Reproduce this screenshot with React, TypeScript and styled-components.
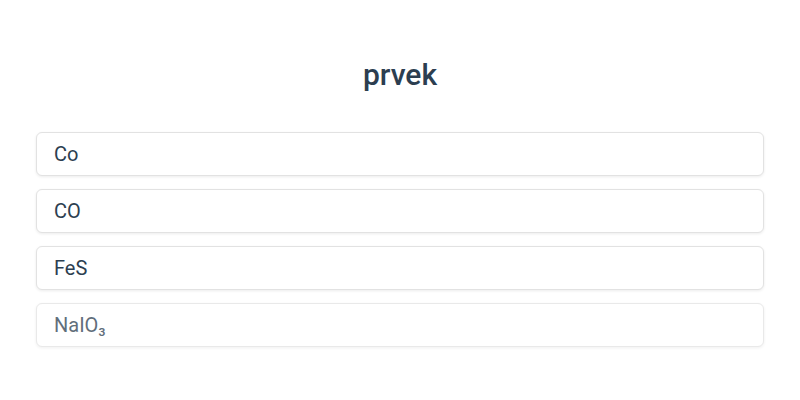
import React from "react";
import styled, { createGlobalStyle } from "styled-components";

const Global = createGlobalStyle`
  html, body { margin: 0; padding: 0; background: #ffffff; }
  body { font-family: Roboto, "Noto Sans", "Liberation Sans", sans-serif; }
`;

const Page = styled.div`
  width: 800px;
  height: 400px;
  box-sizing: border-box;
  padding: 57px 36px 0;
  display: flex;
  flex-direction: column;
`;

const Title = styled.h1`
  margin: 0 0 39px;
  font-size: 30px;
  line-height: 36px;
  font-weight: 500;
  color: #2c3e50;
  text-align: center;
`;

const List = styled.div`
  display: flex;
  flex-direction: column;
  gap: 13px;
`;

const Option = styled.button<{ $faded?: boolean }>`
  height: 44px;
  box-sizing: border-box;
  display: flex;
  align-items: center;
  padding: 0 17px;
  background: #fff;
  border: 1px solid #e2e2e2;
  border-radius: 6px;
  box-shadow: 0 1px 3px rgba(0, 0, 0, 0.08);
  font-family: inherit;
  font-size: 20px;
  color: #2c3e50;
  text-align: left;
  cursor: pointer;
  opacity: ${(p) => (p.$faded ? 0.75 : 1)};
`;

const items = ["Co", "CO", "FeS", "NaIO₃"];

export default function App() {
  return (
    <>
      <Global />
      <Page>
        <Title>prvek</Title>
        <List>
          {items.map((t, i) => (
            <Option key={t} $faded={i === items.length - 1}>
              {t}
            </Option>
          ))}
        </List>
      </Page>
    </>
  );
}
